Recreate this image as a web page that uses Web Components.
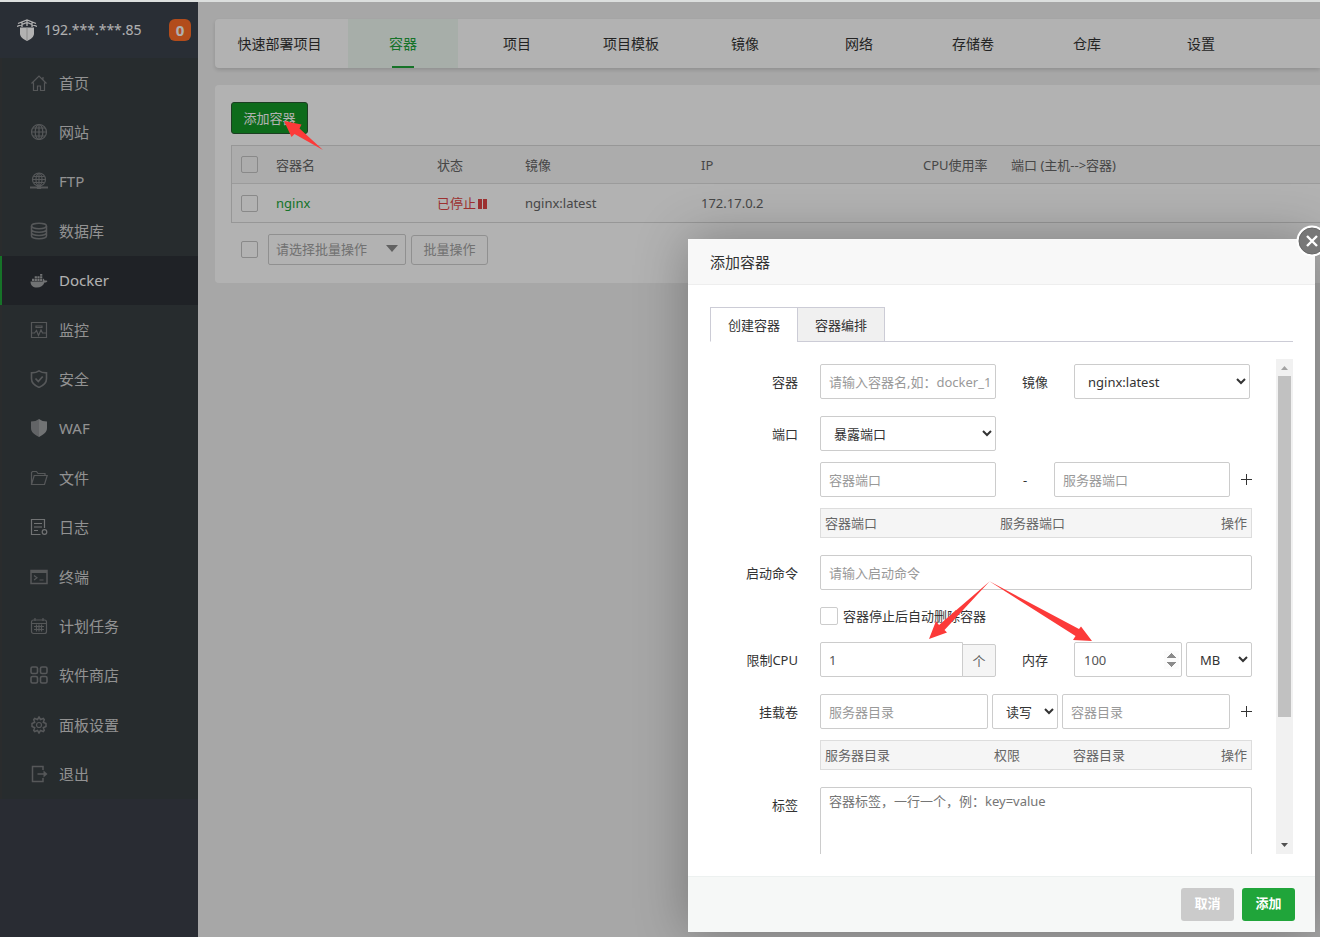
<!DOCTYPE html>
<html lang="zh-CN">
<head>
<meta charset="utf-8">
<title>Docker - 容器</title>
<style>
html,body{margin:0;min-height:100%}
body{font-family:"Noto Sans","Noto Sans CJK SC",sans-serif;font-size:13px;line-height:20px;color:#333;background:#fff;overflow-x:hidden}
</style>
</head>
<body>
<docker-app></docker-app>
<script>
const ICONS = {
home:'<path d="M1.500 9.500 9 2l7.500 7.500M3.500 8.500V16.500h4v-4.500h3v4.500h4V8.500M13 3v2.500"/>',
site:'<circle cx="9" cy="9" r="7.500"/><path d="M1.500 9h15M9 1.500v15M3 5h12M3 13h12"/><ellipse cx="9" cy="9" rx="3.800" ry="7.500"/>',
ftp:'<circle cx="9" cy="7.500" r="6.500"/><path d="M3 7.500h12M9 1.500v12M4 4.500h10M4 10.500h10"/><ellipse cx="9" cy="7.500" rx="3" ry="6"/><path stroke-width="2" d="M0 15.500h18"/><path fill="currentColor" d="M7.500 14h3v2.500h-3z"/>',
db:'<g stroke-width="1.500"><ellipse cx="9" cy="4" rx="7.500" ry="2.700"/><path d="M1.500 4v10c0 1.500 3.400 2.700 7.500 2.700s7.500-1.200 7.500-2.700V4M1.500 7.500c0 1.500 3.400 2.700 7.500 2.700s7.500-1.200 7.500-2.700M1.500 10.800c0 1.500 3.400 2.700 7.500 2.700s7.500-1.200 7.500-2.700"/></g>',
docker:'<path stroke="none" fill="currentColor" d="M.5 10.500h12.300c.3-1-.1-2.300.5-3 .8.600 1.200 1.400 1.200 2.100.9-.3 1.900-.2 2.900.3-.5 1.100-1.500 1.600-2.900 1.600-1.300 3.500-4 5-7.500 5C3 16.500.6 14.500.5 10.500zM2 7.700h2.200v2.200H2zM4.700 7.700h2.200v2.200H4.700zM7.400 7.700h2.200v2.200H7.400zM10.100 7.700h2.200v2.200h-2.200zM4.700 5.200h2.200v2H4.700zM7.400 5.200h2.200v2H7.400zM10.100 5.200h2.200v2h-2.200zM10.100 3h2.200v1.700h-2.200z"/>',
monitor:'<path d="M1.500 1.500h15v15h-15z"/><path d="M2 12h2.500l2-2.500 2 5 2.500-5.500 1.500 3H16M6 5h6v1.500H6z"/>',
safe:'<path stroke-width="1.600" d="M9 .9c2 1.500 4.500 2 7.500 2v5.800c0 4-2.800 6.700-7.500 8.700-4.700-2-7.500-4.700-7.500-8.700V2.900c3 0 5.500-.5 7.500-2z"/><path stroke-width="1.800" d="M5.500 8.500 8.300 11.500l4.400-5"/>',
waf:'<path stroke="none" fill="currentColor" opacity=".8" d="M9 0v18C4 15.500 1 13 1 9V2.500C4 2.500 7 1.700 9 0z"/><path stroke="none" fill="currentColor" d="M9 0v18c5-2.500 8-5 8-9V2.500C14 2.500 11 1.700 9 0z"/>',
file:'<path d="M1.500 15V3.500l1-1h4l1.500 2h7v2M1.500 15.500l2.700-9h13L14.500 15.500z"/>',
log:'<path d="M14.500 10V1.500h-13v15h9M4 5.500h8M4 9h8M4 12.500h4"/><circle cx="14.500" cy="14" r="2.300"/>',
term:'<path stroke-width="1.500" d="M1 2.500h16v13H1z"/><path stroke-width="2" d="M1 4h16"/><path d="m4 7.500 3 2.300L4 12M9.500 12h4"/>',
cron:'<rect x="1.500" y="3" width="15" height="13.500" rx="2"/><path d="M1.500 6.500h15M5 1v3M13 1v3M4 9.500h10M4 12.500h10M6.500 7.500v7M9 7.500v7M11.500 7.500v7"/>',
store:'<g stroke-width="1.600"><rect x="1" y="1" width="6.500" height="6.500" rx="1.500"/><rect x="10.500" y="1" width="6.500" height="6.500" rx="1.500"/><rect x="1" y="10.500" width="6.500" height="6.500" rx="1.500"/><rect x="10.500" y="10.500" width="6.500" height="6.500" rx="1.500"/></g>',
set:'<path stroke-width="1.500" d="m9 1 1.500 2.500 2.800-1 1 1.200-1 2.600L16 7.500v3l-2.700 1.200 1 2.600-1 1.200-2.800-1L9 17l-1.500-2.500-2.800 1-1-1.200 1-2.600L2 10.500v-3l2.700-1.200-1-2.600 1-1.200 2.800 1z"/><circle cx="9" cy="9" r="2.500"/>',
exit:'<path stroke-width="1.500" d="M13 5V1.500H2.500v15H13V13M7.500 9h8.500"/><path fill="currentColor" stroke="none" d="m13.500 5.500 4 3.500-4 3.500z"/>'
};
const define = (name, html, setup) => {
  const template = document.createElement('template');
  template.innerHTML = html;
  customElements.define(name, class extends HTMLElement {
    constructor(){ super(); this.attachShadow({mode:'open'}).append(template.content.cloneNode(true)); }
    connectedCallback(){ if (setup) setup(this, this.shadowRoot); }
  });
};

define('menu-item', `<style>
:host{display:block}
a{box-sizing:border-box;height:100%;display:flex;align-items:center;gap:11px;padding-left:28px;border-left:2px solid #3d3f41;color:#d2d2d2;font-size:15px;text-decoration:none}
:host([active]) a{background:#2d3137;border-color:#20a53a;color:#fff}
svg{width:18px;height:18px;flex:none;color:#7b7e80}
:host([active]) svg,:host([bright]) svg{color:#a3a5a6}
</style><a href="#"><svg viewBox="0 0 18 18" fill="none" stroke="currentColor" stroke-width="1.200"></svg><slot></slot></a>`,
(host, root) => { root.querySelector('svg').innerHTML = ICONS[host.getAttribute('icon')] || '';
  if (host.hasAttribute('active')) root.querySelector('a').setAttribute('aria-current','page'); });

define('side-bar', `<style>
:host{display:block;background:#3b3f4a}
header{height:56px;display:flex;align-items:center;box-sizing:border-box;padding:0 7px 0 17px;background:#3c424d;color:#fdfdfd;font-size:14px}
header svg{width:20px;height:22px;margin-right:7px}
header b{margin-left:auto;width:22px;height:22px;line-height:22px;border-radius:6px;background:#ff6e27;text-align:center;font-size:15px}
nav{display:grid;grid-auto-rows:1fr;min-height:741px;background:#383f43}
</style>
<header><svg viewBox="0 0 20 22" aria-hidden="true"><path fill="#fff" d="M3 8.500h14v6c0 3.500-3 5.500-7 7.500-4-2-7-4-7-7.500z"/><path fill="none" stroke="#fff" stroke-width="1.300" d="M1 4.500 10 1l9 3.500M0 7.500l10-4 10 4M5 3v5M15 3v5M10 1v6"/><path stroke="#bbb" stroke-width=".8" d="M10 8v13"/></svg><span>192.***.***.85</span><b>0</b></header>
<nav>
<menu-item icon="home">首页</menu-item><menu-item icon="site">网站</menu-item><menu-item icon="ftp">FTP</menu-item><menu-item icon="db">数据库</menu-item><menu-item icon="docker" active>Docker</menu-item><menu-item icon="monitor">监控</menu-item><menu-item icon="safe">安全</menu-item><menu-item icon="waf" bright>WAF</menu-item><menu-item icon="file">文件</menu-item><menu-item icon="log" bright>日志</menu-item><menu-item icon="term">终端</menu-item><menu-item icon="cron">计划任务</menu-item><menu-item icon="store">软件商店</menu-item><menu-item icon="set">面板设置</menu-item><menu-item icon="exit">退出</menu-item>
</nav>`);

define('top-tabs', `<style>
:host{display:block;background:#fff;border-radius:4px 0 0 4px;box-shadow:0 2px 4px rgba(0,0,0,.14);overflow:hidden}
nav{display:flex;gap:4px;height:49px}
a{flex:none;box-sizing:border-box;min-width:110px;padding:0 22px;display:flex;align-items:center;justify-content:center;position:relative;font-size:14px;color:#333;text-decoration:none}
a:first-child{min-width:129px}
a[aria-current]{background:#f0f9f3;color:#20a53a}
a[aria-current]::after{content:"";position:absolute;bottom:0;left:44px;width:22px;height:2px;background:#20a53a}
</style><nav><a href="#">快速部署项目</a><a href="#" aria-current="page">容器</a><a href="#">项目</a><a href="#">项目模板</a><a href="#">镜像</a><a href="#">网络</a><a href="#">存储卷</a><a href="#">仓库</a><a href="#">设置</a></nav>`);

define('container-list', `<style>
:host{display:block;background:#fff;border-radius:4px 0 0 4px;padding:17px 0 18px 16px}
input{appearance:none;box-sizing:border-box;width:17px;height:17px;margin:0;border:1px solid #c4c4c4;border-radius:2px;display:block;background:transparent}
button{font:inherit;cursor:pointer}
.add{display:block;width:77px;height:32px;padding:0;border:1px solid #285a30;border-radius:3px;background:#149a28;color:#fff;margin-bottom:11px}
table{width:100%;table-layout:fixed;border-collapse:separate;border-spacing:0;border:1px solid #d9d9d9;border-right:0;color:#666}
th,td{box-sizing:border-box;height:38px;padding:0 9px;text-align:left;font-weight:400;white-space:nowrap}
th{background:#f6f6f6;border-bottom:1px solid #dedede}
td a{color:#20a53a;text-decoration:none}
.stop{color:#e04545}
.stop svg{width:9px;height:10px;vertical-align:-1px;margin-left:2px}
footer{display:flex;align-items:center;padding:11px 0 0 10px}
.pick{position:relative;margin:0 5px 0 10px}
select{appearance:none;box-sizing:border-box;display:block;width:138px;height:31px;padding:0 7px 2px;border:1px solid #cfcfcf;border-radius:2px;background:#fff;color:#a2a2a2;font:inherit;line-height:20px}
.pick svg{position:absolute;right:8px;top:11px;width:12px;height:7px;pointer-events:none}
.batch{width:77px;height:30px;padding:0 0 2px;border:1px solid #cfcfcf;border-radius:3px;background:#fff;color:#a2a2a2}
</style>
<button class="add">添加容器</button>
<table><colgroup><col style="width:35px"><col style="width:161px"><col style="width:88px"><col style="width:176px"><col style="width:222px"><col style="width:88px"><col></colgroup>
<thead><tr><th><input type="checkbox" aria-label="全选"></th><th>容器名</th><th>状态</th><th>镜像</th><th>IP</th><th>CPU使用率</th><th>端口 (主机--&gt;容器)</th></tr></thead>
<tbody><tr><td><input type="checkbox" aria-label="选择 nginx"></td><td><a href="#">nginx</a></td><td class="stop">已停止<svg viewBox="0 0 9 10"><path fill="currentColor" d="M0 0h4v10H0zM5 0h4v10H5z"/></svg></td><td>nginx:latest</td><td>172.17.0.2</td><td></td><td></td></tr></tbody></table>
<footer><input type="checkbox" aria-label="选择全部"><div class="pick"><select aria-label="批量操作"><option>请选择批量操作</option></select><svg viewBox="0 0 12 7"><path d="M0 0h12L6 7z" fill="#8c8c8c"/></svg></div><button class="batch">批量操作</button></footer>`);

define('form-row', `<style>
:host{display:grid;grid-template-columns:88px 432px;column-gap:22px;margin-bottom:17px}
.label{height:35px;display:flex;align-items:center;justify-content:flex-end}
.body{display:flex;flex-direction:column;gap:11px}
:host([plain]) .label{height:18px}
</style><div class="label"><slot name="label"></slot></div><div class="body"><slot></slot></div>`);

define('scroll-rail', `<style>
:host{display:flex;flex-direction:column;width:17px;box-sizing:border-box;background:#f1f1f1}
svg{width:17px;height:17px;flex:none}
i{flex:0 0 74%;margin:0 2px;background:#c1c1c1}
.track{flex:1;display:flex;flex-direction:column}
</style><svg viewBox="0 0 17 17"><path fill="#a3a3a3" d="M5 11h7L8.500 7z"/></svg><div class="track"><i></i></div><svg viewBox="0 0 17 17"><path fill="#505050" d="M5 6h7L8.500 10z"/></svg>`);

define('add-dialog', `<style>
:host{display:block;width:627px;background:#fff;box-shadow:1px 1px 50px rgba(0,0,0,.3)}
*{box-sizing:border-box}
header{height:46px;padding:0 22px;display:flex;align-items:center;background:#f8f8f8;border-bottom:1px solid #eee}
h2{margin:0;font-size:15px;font-weight:400}
button{font:inherit;cursor:pointer}
.close{position:absolute;top:-14px;right:-13px;width:32px;height:32px;padding:0;border:0;background:none}
.close svg{display:block;width:32px;height:32px}
main{padding:22px}
.tabs{display:flex;height:35px;border-bottom:1px solid #ccccd6;margin-bottom:17px}
.tabs button{width:88px;height:35px;padding:0;border:1px solid #ccccd6;background:#f0f0f0;color:#333;margin-right:-1px}
.tabs button[aria-selected=true]{background:#fff;border-bottom-color:#fff}
.scroll{display:flex;justify-content:space-between;height:495px}
form{flex:1;min-width:0;padding-top:5px;overflow-y:auto;scrollbar-width:none}
form::-webkit-scrollbar{display:none}
.line{display:flex;align-items:center}
.line>*{flex:none}
input,select,textarea{font:inherit;color:#555;height:35px;margin:0;border:1px solid #ccc;border-radius:2px;background:#fff;padding:0 0 0 8px;width:176px}
select{padding:0 0 0 9px;color:#333}
::placeholder{color:#999;opacity:1}
textarea{display:block;width:100%;height:80px;padding:3px 8px}
textarea::placeholder{color:#757575}
.wide{width:100%}
.mid{width:78px;text-align:center}
.dash{width:58px;text-align:center}
.plus{border:0;background:none;padding:0;width:22px;height:35px;display:flex;align-items:center;justify-content:flex-end}
.plus svg{width:11px;height:11px}
table{width:100%;height:30px;table-layout:fixed;border-spacing:0;border:1px solid #ddd;background:#f5f5f5;color:#666}
th{padding:0 4px;text-align:left;font-weight:400}
th:last-child{text-align:right}
.tick{display:flex;align-items:center;gap:5px;height:18px}
.tick input{appearance:none;width:18px;height:18px;padding:0}
.cpu{width:143px;border-radius:2px 0 0 2px}
.unit{align-self:flex-end;width:34px;height:33px;margin-left:-1px;display:flex;align-items:center;justify-content:center;border:1px solid #ccc;border-radius:0 2px 2px 0;background:#f5f5f5;color:#666}
.mem{width:108px;margin-right:4px;padding:0 2px 0 9px}
.mem::-webkit-inner-spin-button{opacity:1}
.small{width:66px}
.mode{margin:0 4px}
.path{width:168px}
footer{height:56px;display:flex;align-items:center;justify-content:flex-end;gap:8px;padding-right:20px;background:#f6f8f7;border-top:1px solid #edf1f0}
footer button{width:53px;height:33px;padding:0 0 3px;border:0;border-radius:3px;background:#cbcbcb;color:#fff;font-weight:700}
footer .ok{background:#20a53a}
</style>
<header><h2>添加容器</h2></header>
<button class="close" aria-label="关闭"><svg viewBox="0 0 32 32"><circle cx="16" cy="16" r="15.500" fill="#fff"/><circle cx="16" cy="16" r="13" fill="#777" stroke="#666"/><path d="m11 11 10 10M21 11 11 21" stroke="#fff" stroke-width="2.400"/></svg></button>
<main>
<div class="tabs" role="tablist"><button role="tab" aria-selected="true">创建容器</button><button role="tab" aria-selected="false">容器编排</button></div>
<div class="scroll"><form>
<form-row><label slot="label" for="name">容器</label><div class="line"><input id="name" placeholder="请输入容器名,如：docker_1"><label class="mid" for="image">镜像</label><select id="image"><option>nginx:latest</option></select></div></form-row>
<form-row><label slot="label" for="port">端口</label><div class="line"><select id="port"><option>暴露端口</option></select></div>
<div class="line"><input aria-label="容器端口" placeholder="容器端口"><span class="dash">-</span><input aria-label="服务器端口" placeholder="服务器端口"><button type="button" class="plus" aria-label="添加端口"><svg viewBox="0 0 11 11"><path d="M5.500 0v11M0 5.500h11" stroke="#333" stroke-width="1"/></svg></button></div>
<table><colgroup><col style="width:175px"><col><col style="width:80px"></colgroup><thead><tr><th>容器端口</th><th>服务器端口</th><th>操作</th></tr></thead></table></form-row>
<form-row><label slot="label" for="cmd">启动命令</label><input id="cmd" class="wide" placeholder="请输入启动命令"></form-row>
<form-row plain><div class="tick"><input type="checkbox" id="rm"><label for="rm">容器停止后自动删除容器</label></div></form-row>
<form-row><label slot="label" for="cpu">限制CPU</label><div class="line"><input id="cpu" class="cpu" value="1"><span class="unit">个</span><label class="mid" for="mem">内存</label><input id="mem" class="mem" type="number" value="100"><select class="small" aria-label="内存单位"><option>MB</option></select></div></form-row>
<form-row><label slot="label" for="vol">挂载卷</label><div class="line"><input id="vol" class="path" placeholder="服务器目录"><select class="small mode" aria-label="权限"><option>读写</option></select><input class="path" aria-label="容器目录" placeholder="容器目录"><button type="button" class="plus" aria-label="添加挂载"><svg viewBox="0 0 11 11"><path d="M5.500 0v11M0 5.500h11" stroke="#333" stroke-width="1"/></svg></button></div>
<table><colgroup><col style="width:169px"><col style="width:79px"><col><col style="width:80px"></colgroup><thead><tr><th>服务器目录</th><th>权限</th><th>容器目录</th><th>操作</th></tr></thead></table></form-row>
<form-row><label slot="label" for="tags">标签</label><textarea id="tags" placeholder="容器标签，一行一个，例：key=value"></textarea></form-row>
</form><scroll-rail></scroll-rail></div>
</main>
<footer><button>取消</button><button class="ok">添加</button></footer>`);

define('guide-arrows', `<style>
:host{display:block;pointer-events:none}
svg{display:block;width:1320px;height:937px}
</style><svg viewBox="0 0 1320 937" fill="#fc3a39"><path d="M284 121 301.500 124.500 299.500 128.500 323 150 294.500 134 291.500 137z"/><path d="M929 639 936 621 939 625 989.500 581.500 944.500 630 947 632.500z"/><path d="M1092 641 1081 626.500 1079 629 989 581 1075.500 636 1073 640z"/></svg>`);

define('docker-app', `<style>
:host{display:grid;grid-template-columns:198px minmax(0,1fr);position:relative;min-height:100vh;box-sizing:border-box;border-top:2px solid #dcdfde;overflow:hidden;background:#f0f0f0}
section{padding:17px 0 0 17px;display:flex;flex-direction:column;gap:17px}
.mask{position:absolute;inset:0;background:rgba(0,0,0,.3)}
add-dialog{position:absolute;top:237px;right:5px}
guide-arrows{position:absolute;top:-2px;left:0}
</style><side-bar></side-bar><section><top-tabs></top-tabs><container-list></container-list></section><div class="mask"></div><add-dialog role="dialog" aria-label="添加容器"></add-dialog><guide-arrows></guide-arrows>`);
</script>
</body>
</html>
